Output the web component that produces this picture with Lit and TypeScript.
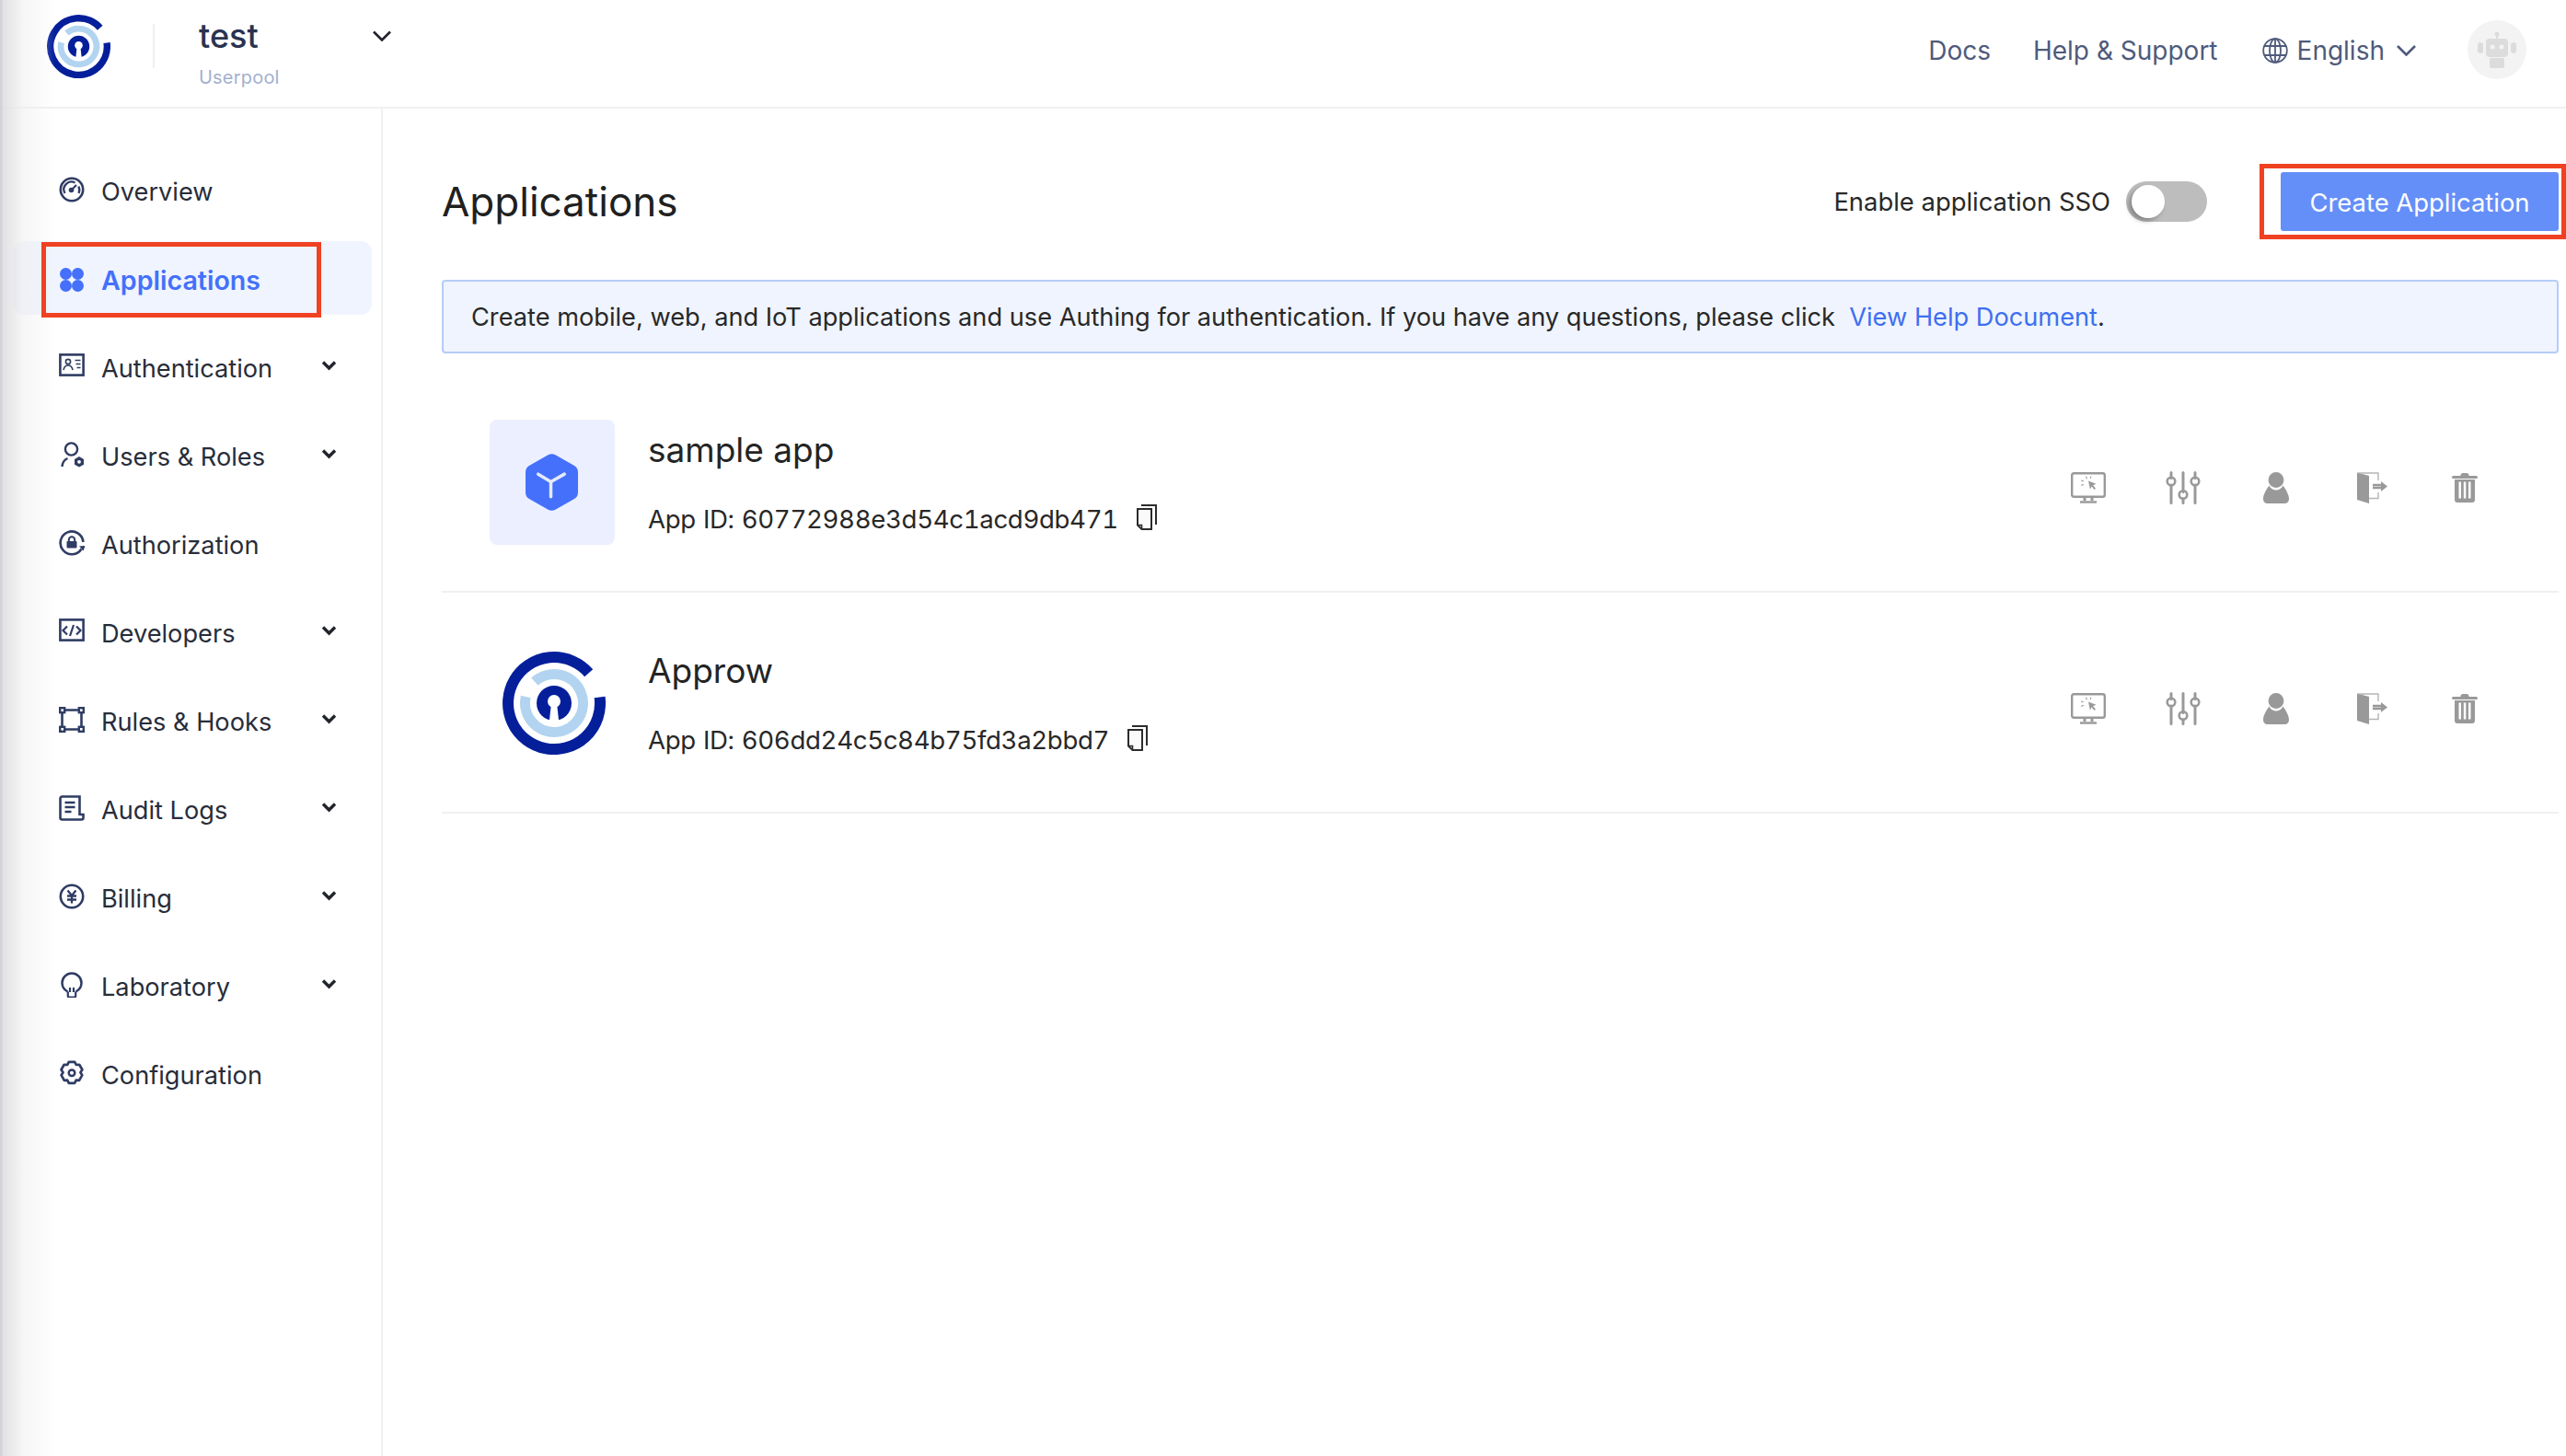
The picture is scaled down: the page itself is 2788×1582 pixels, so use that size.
import { LitElement, html, css, svg } from "lit";
import { customElement } from "lit/decorators.js";

const logo = (size: number) => html`<svg class="logo" width=${size} height=${size} viewBox="0 0 112 112" fill="none">
  <path d="M105.6 49.5A50 50 0 1 1 93.7 23.2" stroke="#051f9b" stroke-width="12"/>
  <path d="M34.9 32.6A31.5 31.5 0 1 1 25.3 48.9" stroke="#b2d4f0" stroke-width="11"/>
  <circle cx="56" cy="56" r="19" fill="#051f9b"/>
  <circle cx="56" cy="54" r="7" fill="#fff"/>
  <path d="M53 56h6l2.2 20h-10.4z" fill="#fff"/>
</svg>`;

const chevron = html`<svg class="chev" width="17" height="12" viewBox="0 0 17 12" fill="none"><path d="M2 2.500l6.500 6.500 6.500-6.500" stroke="#22242c" stroke-width="3.400"/></svg>`;

const navIcons: Record<string, unknown> = {
  overview: svg`<circle cx="14" cy="14" r="12.2" stroke-width="2.6"/><path d="M6.5 18A8.300 8.300 0 0 1 17.500 6.500M21.300 10.500a8.300 8.300 0 0 1 .2 7.500" stroke-width="2.300"/><circle cx="13.500" cy="14.500" r="2.800" fill="#2f3c63" stroke="none"/><path d="M14 14l5-5" stroke-width="2.200"/>`,
  auth: svg`<rect x="1.4" y="1.4" width="25.2" height="22.2" stroke-width="2.6"/><circle cx="10" cy="9" r="2.6" stroke-width="1.6"/><path d="M5 18c.6-3.4 2.6-5 5-5s4.4 1.6 5 5M17.500 7.500h6M18.500 11.500h5M19.500 15.500h4" stroke-width="1.6"/>`,
  users: svg`<circle cx="13.500" cy="8" r="6.600" stroke-width="2.400"/><path d="M3.500 27c.3-4.200 2.500-7.500 6-9" stroke-width="2.400"/><path d="M22 16l5 2.900v5.800L22 27.600l-5-2.900v-5.800z" fill="#2f3c63" stroke="none"/><circle cx="22" cy="21.800" r="1.900" fill="#fff" stroke="none"/>`,
  authz: svg`<path d="M24.500 20.500A12.400 12.400 0 1 1 26.400 13" stroke-width="2.600"/><path d="M22 17.500l4.500 5 2-5.500z" fill="#2f3c63" stroke="none"/><rect x="8.500" y="12" width="11" height="7.500" rx="1" fill="#2f3c63" stroke="none"/><path d="M10.800 12.500V10.500a3.200 3.200 0 0 1 6.400 0v2" stroke-width="2"/>`,
  dev: svg`<rect x="1.400" y="1.400" width="25.200" height="22.200" stroke-width="2.600"/><path d="M9 8.500l-4.500 4.500 4.500 4.500M19 8.500l4.500 4.500-4.500 4.500M16 7l-4 12" stroke-width="2.200"/>`,
  rules: svg`<path d="M5 3.500h18M5 24.500h18M3.500 5v18M24.500 5v18" stroke-width="2.600"/><g stroke-width="2.400"><rect x="1.200" y="1.200" width="5" height="5"/><rect x="21.800" y="1.200" width="5" height="5"/><rect x="1.200" y="21.800" width="5" height="5"/><rect x="21.800" y="21.800" width="5" height="5"/></g>`,
  audit: svg`<path d="M22.500 22V1.500H3.500A2 2 0 0 0 1.500 3.500v21a2 2 0 0 0 2 2h21a2 2 0 0 0 2-2V21h-4" stroke-width="2.600"/><path d="M6.500 8h11M6.500 13h11M6.500 18h7" stroke-width="2.400"/>`,
  billing: svg`<circle cx="14" cy="14" r="12.200" stroke-width="2.600"/><path d="M9.500 7.500l4.500 5.500 4.500-5.500M9 13.500h10M9 17.500h10M14 13v8.500" stroke-width="2.300"/>`,
  lab: svg`<path d="M9.500 21.500C6 19.500 3.500 16.500 3.500 12a10.500 10.500 0 0 1 21 0c0 4.500-2.500 7.500-6 9.500" stroke-width="2.500"/><path d="M9.800 21.500v4.500a1.500 1.500 0 0 0 1.500 1.500h5.400a1.500 1.500 0 0 0 1.500-1.500v-4.500M12 22V17M16 22V17" stroke-width="2.200"/>`,
  config: svg`<path d="M10.800 1.800h6.400l1.600 3.200 3.400-.2 3.200 5.500-2 3 1.900 2.900-3.200 5.600-3.400-.2-1.500 3.200h-6.400l-1.600-3.200-3.400.2-3.200-5.600 1.900-2.900-2-3 3.200-5.500 3.400.2z" stroke-width="2.700" stroke-linejoin="round"/><circle cx="14" cy="13.800" r="3.300" stroke-width="2.500"/>`,
};

const navItems = [
  { label: "Overview", icon: "overview" },
  { label: "Applications", active: true },
  { label: "Authentication", icon: "auth", more: true },
  { label: "Users & Roles", icon: "users", more: true },
  { label: "Authorization", icon: "authz" },
  { label: "Developers", icon: "dev", more: true },
  { label: "Rules & Hooks", icon: "rules", more: true },
  { label: "Audit Logs", icon: "audit", more: true },
  { label: "Billing", icon: "billing", more: true },
  { label: "Laboratory", icon: "lab", more: true },
  { label: "Configuration", icon: "config" },
];

const appsIcon = html`<svg width="28" height="28" viewBox="0 0 28 28" fill="#4470fb"><circle cx="7.500" cy="7.500" r="6.500"/><circle cx="20.500" cy="7.500" r="6.500"/><circle cx="7.500" cy="20.500" r="6.500"/><circle cx="20.500" cy="20.500" r="6.500"/></svg>`;

const actions = html`<div class="actions">
  <svg width="38" height="34" viewBox="0 0 38 34" fill="none" stroke="#999"><rect x="1.200" y="1.200" width="35.600" height="25.600" rx="2" stroke-width="2.400"/><path d="M15 27v4" stroke-width="3"/><path d="M23 27v4" stroke-width="3"/><path d="M10 32.500h18" stroke-width="2.400"/><path d="M19 9.500l8.500 3.300-3.400 1.500 2.900 3.400-1.500 1.200-2.800-3.400-1.800 3z" fill="#999" stroke="none"/><path d="M17.400 7.400l-.8-2.800M13.800 9.800l-2.700-.9M13.800 13.300l-2.500 1.300M21.200 6.900l.8-2.300" stroke-width="1.100"/></svg>
  <svg width="38" height="36" viewBox="0 0 38 36" fill="none" stroke="#999"><g stroke-width="3" stroke-linecap="round"><path d="M6 1.500v6M6 15v19.500M19 1.500v21M19 30v4.500M32 1.500v6M32 15v19.500"/></g><circle cx="6" cy="11" r="4.300" stroke-width="2.600"/><circle cx="19" cy="25.500" r="4.300" stroke-width="2.600"/><circle cx="32" cy="11" r="4.300" stroke-width="2.600"/></svg>
  <svg width="28" height="34" viewBox="0 0 28 34" fill="#999"><circle cx="14" cy="8.500" r="8.400"/><path d="M6.500 14.500C8 18 11 19.500 14 19.500s6-1.500 7.500-5c2.500 3.500 6.500 9.500 6.500 14.500 0 3-2 5-5 5H5c-3 0-5-2-5-5 0-5 4-11 6.500-14.500z"/></svg>
  <svg width="33" height="34" viewBox="0 0 33 34" fill="none"><path d="M0 0.500l13 3.500v30l-13-4z" fill="#999"/><path d="M1 1h22v8M23 22v6.500h-10" stroke="#b5b5b5" stroke-width="1.400"/><path d="M17 14h9M17 17h9" stroke="#999" stroke-width="2.500"/><path d="M26 10l7 5.500-7 5.500z" fill="#999"/></svg>
  <svg width="28" height="32" viewBox="0 0 28 32" fill="#999"><path d="M9.500 3a2.500 2.500 0 0 1 2.500-3h4a2.500 2.500 0 0 1 2.500 3H26.500a1.500 1.500 0 0 1 0 3h-25a1.500 1.500 0 0 1 0-3z"/><path fill-rule="evenodd" d="M3 7h22v22a3 3 0 0 1-3 3H6a3 3 0 0 1-3-3zM7.500 9.500v18h2.500v-18zM12.800 9.500v18h2.500v-18zM18 9.500v18h2.500v-18z"/></svg>
</div>`;

const copyIcon = html`<svg class="copy" width="22" height="28" viewBox="0 0 22 28" fill="none" stroke="#2c2c2c" stroke-width="2"><path d="M5 1h16v21"/><path d="M1 5h15v22H5.500L1 22.500z" fill="#fafafa"/><path d="M1 22.500h4.500V27" stroke-width="1.600"/></svg>`;

const boxIcon = html`<svg width="57" height="64" viewBox="0 0 58 64" fill="none"><path d="M25 1.800a8 8 0 0 1 8 0l21 12a8 8 0 0 1 4 7v22.400a8 8 0 0 1-4 7l-21 12a8 8 0 0 1-8 0l-21-12a8 8 0 0 1-4-7V20.800a8 8 0 0 1 4-7z" fill="#4470fb"/><path d="M14 23l14 8.500 15-8.500M28 31.500V48" stroke="#e4eafc" stroke-width="3.600" stroke-linecap="round"/></svg>`;

@customElement("app-root")
export class AppRoot extends LitElement {
  static styles = css`
    :host { display: block; position: relative; width: 2788px; height: 1582px; overflow: hidden; background: #fff; font-family: Inter, "Liberation Sans", sans-serif; color: #282828; }
    svg { display: block; flex: none; }
    .header { display: flex; align-items: center; height: 116px; border-bottom: 2px solid #f0f0f0; box-sizing: content-box; padding: 0 43px 0 51px; }
    .header .logo { margin-top: -16px; }
    .divider { width: 2px; height: 48px; background: #f0f0f0; margin: -17px 48px 0 46px; }
    .pool { width: 189px; margin-top: -4px; display: flex; flex-direction: column; }
    .pool-name { font-size: 36px; line-height: 44px; font-weight: 500; color: #293350; }
    .pool-sub { font-size: 20px; line-height: 24px; color: #a3b0cf; margin-top: 11px; letter-spacing: 0.2px; }
    .head-chev { margin-top: -38px; }
    .spacer { flex: 1; }
    .hlink { font-size: 28px; color: #4f5a7b; margin-top: -6px; }
    .docs { margin-right: 46px; }
    .help { margin-right: 48px; }
    .lang { display: flex; align-items: center; gap: 10px; margin: -6px 56px 0 0; font-size: 28px; color: #4f5a7b; }
    .lang svg:last-child { margin-left: 3px; }
    .avatar { width: 64px; height: 64px; border-radius: 50%; background: #f3f3f3; display: flex; align-items: center; justify-content: center; margin-top: -8px; }
    .body { display: flex; height: 1464px; }
    .side { border-right: 2px solid #f0f0f0; padding: 48px 10px 0 14px; box-sizing: content-box; width: 390px; display: flex; flex-direction: column; gap: 16px; flex: none; }
    .item { height: 80px; box-sizing: border-box; display: flex; align-items: center; padding: 4px 38px 0 50px; border-radius: 12px; font-size: 27.2px; color: #282d3a; }
    .item.active { background: #f0f4fe; color: #4470fb; font-weight: 600; font-size: 28.6px; }
    .item svg.nav { fill: none; stroke: #2f3c63; margin-top: -4px; }
    .item .label { margin-left: 18px; flex: 1; }
    .item .chev { margin-top: -6px; }
    .main { flex: 1; padding: 60px 8px 0 64px; min-width: 0; }
    .title-row { display: flex; align-items: center; height: 82px; }
    h1 { margin: 0; font-size: 44px; font-weight: 400; color: #202020; flex: 1; }
    .sso { font-size: 27.4px; margin-right: 17px; color: #282828; }
    .toggle { width: 88px; height: 44px; border-radius: 22px; background: #bdbdbd; position: relative; margin-right: 80px; }
    .knob { position: absolute; left: 6px; top: 4px; width: 36px; height: 36px; border-radius: 50%; background: #fff; box-shadow: -3px 3px 5px rgba(0,0,0,0.3); }
    .btn { width: 302px; height: 64px; box-sizing: border-box; padding-top: 2px; background: #658ff8; color: #fff; border-radius: 3px; font-size: 27.4px; display: flex; align-items: center; justify-content: center; }
    .banner { margin-top: 44px; height: 80px; box-sizing: border-box; border: 2px solid #b5cdf7; border-radius: 4px; background: #f0f4fe; display: flex; align-items: center; padding-left: 30px; font-size: 27.2px; color: #282828; white-space: pre; }
    .banner .link { color: #3e6ff0; }
    .rows { margin-top: 20px; }
    .row { height: 240px; box-sizing: border-box; border-bottom: 2px solid #f0f0f0; display: flex; align-items: center; padding: 2px 0 0 52px; }
    .thumb { width: 136px; height: 136px; border-radius: 8px; display: flex; align-items: center; justify-content: center; flex: none; margin-right: 36px; }
    .thumb.tint { background: #ecefff; }
    .thumb.tint svg { margin-left: -2px; }
    .thumb.plain svg { margin-left: 4px; }
    .info { flex: 1; display: flex; flex-direction: column; margin-top: 1px; }
    .name { font-size: 37px; line-height: 44px; color: #242424; }
    .id { font-size: 27.6px; line-height: 36px; margin-top: 35px; color: #282828; display: flex; align-items: center; font-variant-numeric: tabular-nums; letter-spacing: -0.33px; word-spacing: 1px; }
    .copy { margin-left: 20px; margin-top: -4px; }
    .actions { display: flex; align-items: center; width: 530px; padding-right: 89px; margin-top: 12px; box-sizing: border-box; }
    .actions svg:nth-child(2) { margin-left: 65px; }
    .actions svg:nth-child(3) { margin-left: 68px; }
    .actions svg:nth-child(4) { margin-left: 74px; }
    .actions svg:nth-child(5) { margin-left: 70px; }
    .shade { position: absolute; left: 0; top: 0; bottom: 0; width: 60px; pointer-events: none; background: linear-gradient(90deg, #d2d2d8 0, #d2d2d8 2px, rgba(222,222,225,.9) 3px, rgba(238,238,238,.55) 25px, rgba(255,255,255,0) 60px); }
    .mark { position: absolute; border: 5px solid #f04123; box-sizing: border-box; pointer-events: none; }
    .mark.nav { left: 45px; top: 263px; width: 304px; height: 82px; }
    .mark.cta { left: 2455px; top: 178px; width: 333px; height: 82px; }
  `;

  render() {
    return html`
      <div class="header">
        ${logo(69)}
        <div class="divider"></div>
        <div class="pool"><div class="pool-name">test</div><div class="pool-sub">Userpool</div></div>
        <svg class="head-chev" width="20" height="12" viewBox="0 0 20 12" fill="none"><path d="M1 1.500l9 9 9-9" stroke="#22242c" stroke-width="2.600"/></svg>
        <div class="spacer"></div>
        <div class="hlink docs">Docs</div>
        <div class="hlink help">Help &amp; Support</div>
        <div class="lang">
          <svg width="28" height="28" viewBox="0 0 28 28" fill="none" stroke="#4f5a7b" stroke-width="1.800"><circle cx="14" cy="14" r="12.800"/><ellipse cx="14" cy="14" rx="6" ry="12.800"/><path d="M14 1v26M2 9h24M2 19h24"/></svg>
          <span>English</span>
          <svg width="21" height="12" viewBox="0 0 21 12" fill="none"><path d="M1 1l9.500 9.500 9.500-9.500" stroke="#4f5a7b" stroke-width="2.600"/></svg>
        </div>
        <div class="avatar">
          <svg width="44" height="40" viewBox="0 0 44 40" fill="#dcdcdc"><circle cx="22" cy="3" r="2.500"/><rect x="21" y="3" width="2" height="6"/><rect x="10" y="8" width="24" height="20" rx="4"/><rect x="14" y="29" width="16" height="11" rx="2"/><rect x="1" y="12" width="6" height="12" rx="3"/><rect x="37" y="12" width="6" height="12" rx="3"/><circle cx="17" cy="17" r="2.500" fill="#f3f3f3"/><circle cx="27" cy="17" r="2.500" fill="#f3f3f3"/></svg>
        </div>
      </div>
      <div class="body">
        <div class="side">
          ${navItems.map((n) => html`
            <div class="item ${n.active ? "active" : ""}">
              ${n.active ? appsIcon : html`<svg class="nav" width="28" height="28" viewBox="0 0 28 28">${navIcons[n.icon as string]}</svg>`}
              <span class="label">${n.label}</span>
              ${n.more ? chevron : ""}
            </div>`)}
        </div>
        <div class="main">
          <div class="title-row">
            <h1>Applications</h1>
            <span class="sso">Enable application SSO</span>
            <div class="toggle"><div class="knob"></div></div>
            <div class="btn">Create Application</div>
          </div>
          <div class="banner">Create mobile, web, and IoT applications and use Authing for authentication. If you have any questions, please click  <span class="link">View Help Document</span>.</div>
          <div class="rows">
            <div class="row">
              <div class="thumb tint">${boxIcon}</div>
              <div class="info"><div class="name">sample app</div><div class="id">App ID: 60772988e3d54c1acd9db471${copyIcon}</div></div>
              ${actions}
            </div>
            <div class="row">
              <div class="thumb plain">${logo(112)}</div>
              <div class="info"><div class="name">Approw</div><div class="id">App ID: 606dd24c5c84b75fd3a2bbd7${copyIcon}</div></div>
              ${actions}
            </div>
          </div>
        </div>
      </div>
      <div class="shade"></div>
      <div class="mark nav"></div>
      <div class="mark cta"></div>
    `;
  }
}
